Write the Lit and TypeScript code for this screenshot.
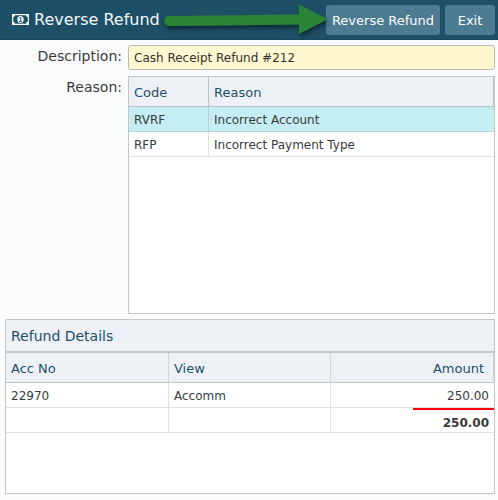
import { LitElement, html, css } from "lit";
import { customElement, state } from "lit/decorators.js";
import { classMap } from "lit/directives/class-map.js";

interface Reason {
  code: string;
  text: string;
}

@customElement("app-root")
export class AppRoot extends LitElement {
  static styles = css`
    :host {
      display: flex;
      flex-direction: column;
      min-height: 100vh;
      box-sizing: border-box;
      background: #fafbfd;
      color: #3a3a3a;
      font-family: "DejaVu Sans", Verdana, sans-serif;
      font-size: 12px;
    }
    * {
      box-sizing: border-box;
    }
    .bar {
      position: relative;
      display: flex;
      align-items: center;
      gap: 5px;
      height: 40px;
      padding: 0 3px 0 12px;
      background: #1d4f66;
      border-bottom: 1px solid #19465b;
      color: #f4f8fa;
    }
    .note {
      width: 17px;
      height: 11px;
      flex: none;
    }
    .title {
      flex: 1;
      margin: 0;
      font-size: 16px;
      line-height: 20px;
      font-weight: 400;
      white-space: nowrap;
    }
    .btn {
      height: 30px;
      padding: 2px 0 0;
      border: 0;
      border-radius: 3px;
      background: #4d7b92;
      color: #fff;
      font: inherit;
      font-size: 13px;
      white-space: nowrap;
    }
    .main-btn {
      width: 114px;
    }
    .exit-btn {
      width: 50px;
    }
    .arrow {
      position: absolute;
      left: 160px;
      top: 0;
      width: 172px;
      height: 40px;
      pointer-events: none;
    }
    .form {
      display: grid;
      grid-template-columns: 117px minmax(0, 1fr);
      gap: 6px;
      padding: 5px 3px 5px 5px;
    }
    .label {
      font-size: 14px;
      line-height: 22px;
      text-align: right;
    }
    .field {
      width: 100%;
      height: 25px;
      padding: 0 5px;
      border: 1px solid #b9b9b9;
      border-radius: 3px;
      background: #fef7cf;
      color: #333;
      font: inherit;
    }
    .box {
      border: 1px solid #c4c6c8;
      background: #fff;
    }
    .reasons {
      min-height: 238px;
    }
    .details {
      flex: 1;
      min-height: 175px;
      margin: 0 3px 6px 5px;
    }
    .caption {
      margin: 0;
      height: 33px;
      padding: 0 5px;
      border-bottom: 2px solid #c4c6c8;
      background: #edf1f6;
      color: #1f4f68;
      font-size: 14px;
      line-height: 32px;
      font-weight: 400;
    }
    table {
      width: 100%;
      table-layout: fixed;
      border-collapse: separate;
      border-spacing: 0;
    }
    th {
      height: 30px;
      padding: 2px 5px 0;
      border-right: 1px solid #bfc1c4;
      border-bottom: 1px solid #bfc1c4;
      background: #edf1f6;
      color: #1f4f68;
      font-size: 13px;
      font-weight: 400;
      text-align: left;
    }
    td {
      height: 25px;
      padding: 2px 5px 0;
      border-right: 1px solid #e1e1e1;
      border-bottom: 1px solid #e1e1e1;
      white-space: nowrap;
    }
    td:last-child {
      border-right: 0;
    }
    .selected td {
      background: #c5edf4;
      border-color: #b4d3da;
    }
    .code {
      width: 80px;
    }
    .acc {
      width: 163px;
    }
    .view {
      width: 162px;
    }
    .details th {
      border-right-color: #d4d6d9;
    }
    th.num {
      padding-right: 9px;
    }
    .num {
      text-align: right;
    }
    td.total {
      padding: 0;
    }
    .sum {
      display: block;
      width: 81px;
      height: 24px;
      margin-left: auto;
      padding-right: 5px;
      border-top: 2px solid #f00;
      font-weight: 700;
      line-height: 26px;
    }
  `;

  private reasons: Reason[] = [
    { code: "RVRF", text: "Incorrect Account" },
    { code: "RFP", text: "Incorrect Payment Type" },
  ];

  @state() private selected = "RVRF";

  render() {
    return html`
      <header class="bar">
        <svg class="note" viewBox="0 0 17 11" aria-hidden="true">
          <path
            fill="#f4f8fa"
            fill-rule="evenodd"
            d="M0 0H17V11H0ZM3 1.3A2.2 2.2 0 0 1 1.2 3.2V7.8A2.2 2.2 0 0 1 3 9.7H14A2.2 2.2 0 0 1 15.8 7.8V3.2A2.2 2.2 0 0 1 14 1.3Z"
          />
          <ellipse cx="8.5" cy="5.5" rx="3.2" ry="3.6" fill="#f4f8fa" />
          <path d="M7.4 4.2L8.7 3.3V7.3M7.2 7.5H10" fill="none" stroke="#1d4f66" stroke-width="0.9" />
        </svg>
        <h1 class="title">Reverse Refund</h1>
        <button class="btn main-btn" type="button">Reverse Refund</button>
        <button class="btn exit-btn" type="button">Exit</button>
        <svg class="arrow" viewBox="0 0 172 40" aria-hidden="true">
          <defs>
            <filter id="shade" x="-5%" y="-20%" width="110%" height="160%">
              <feDropShadow dx="1" dy="3" stdDeviation="2" flood-color="#000" flood-opacity="0.5" />
            </filter>
          </defs>
          <path
            filter="url(#shade)"
            fill="#298435"
            d="M9 16L139 14.5V4.5L168 19L139 34V24.5L9 26A5 5 0 0 1 9 16Z"
          />
        </svg>
      </header>
      <div class="form">
        <label class="label" for="description">Description:</label>
        <input class="field" id="description" type="text" value="Cash Receipt Refund #212" />
        <span class="label" id="reason-label">Reason:</span>
        <div class="box reasons">
          <table aria-labelledby="reason-label">
            <thead>
              <tr>
                <th class="code" scope="col">Code</th>
                <th scope="col">Reason</th>
              </tr>
            </thead>
            <tbody>
              ${this.reasons.map(
                (r) => html`
                  <tr
                    class=${classMap({ selected: r.code === this.selected })}
                    @click=${() => (this.selected = r.code)}
                  >
                    <td>${r.code}</td>
                    <td>${r.text}</td>
                  </tr>
                `
              )}
            </tbody>
          </table>
        </div>
      </div>
      <section class="box details">
        <h2 class="caption" id="details-title">Refund Details</h2>
        <table aria-labelledby="details-title">
          <thead>
            <tr>
              <th class="acc" scope="col">Acc No</th>
              <th class="view" scope="col">View</th>
              <th class="num" scope="col">Amount</th>
            </tr>
          </thead>
          <tbody>
            <tr>
              <td>22970</td>
              <td>Accomm</td>
              <td class="num">250.00</td>
            </tr>
            <tr>
              <td></td>
              <td></td>
              <td class="num total"><span class="sum">250.00</span></td>
            </tr>
          </tbody>
        </table>
      </section>
    `;
  }
}
